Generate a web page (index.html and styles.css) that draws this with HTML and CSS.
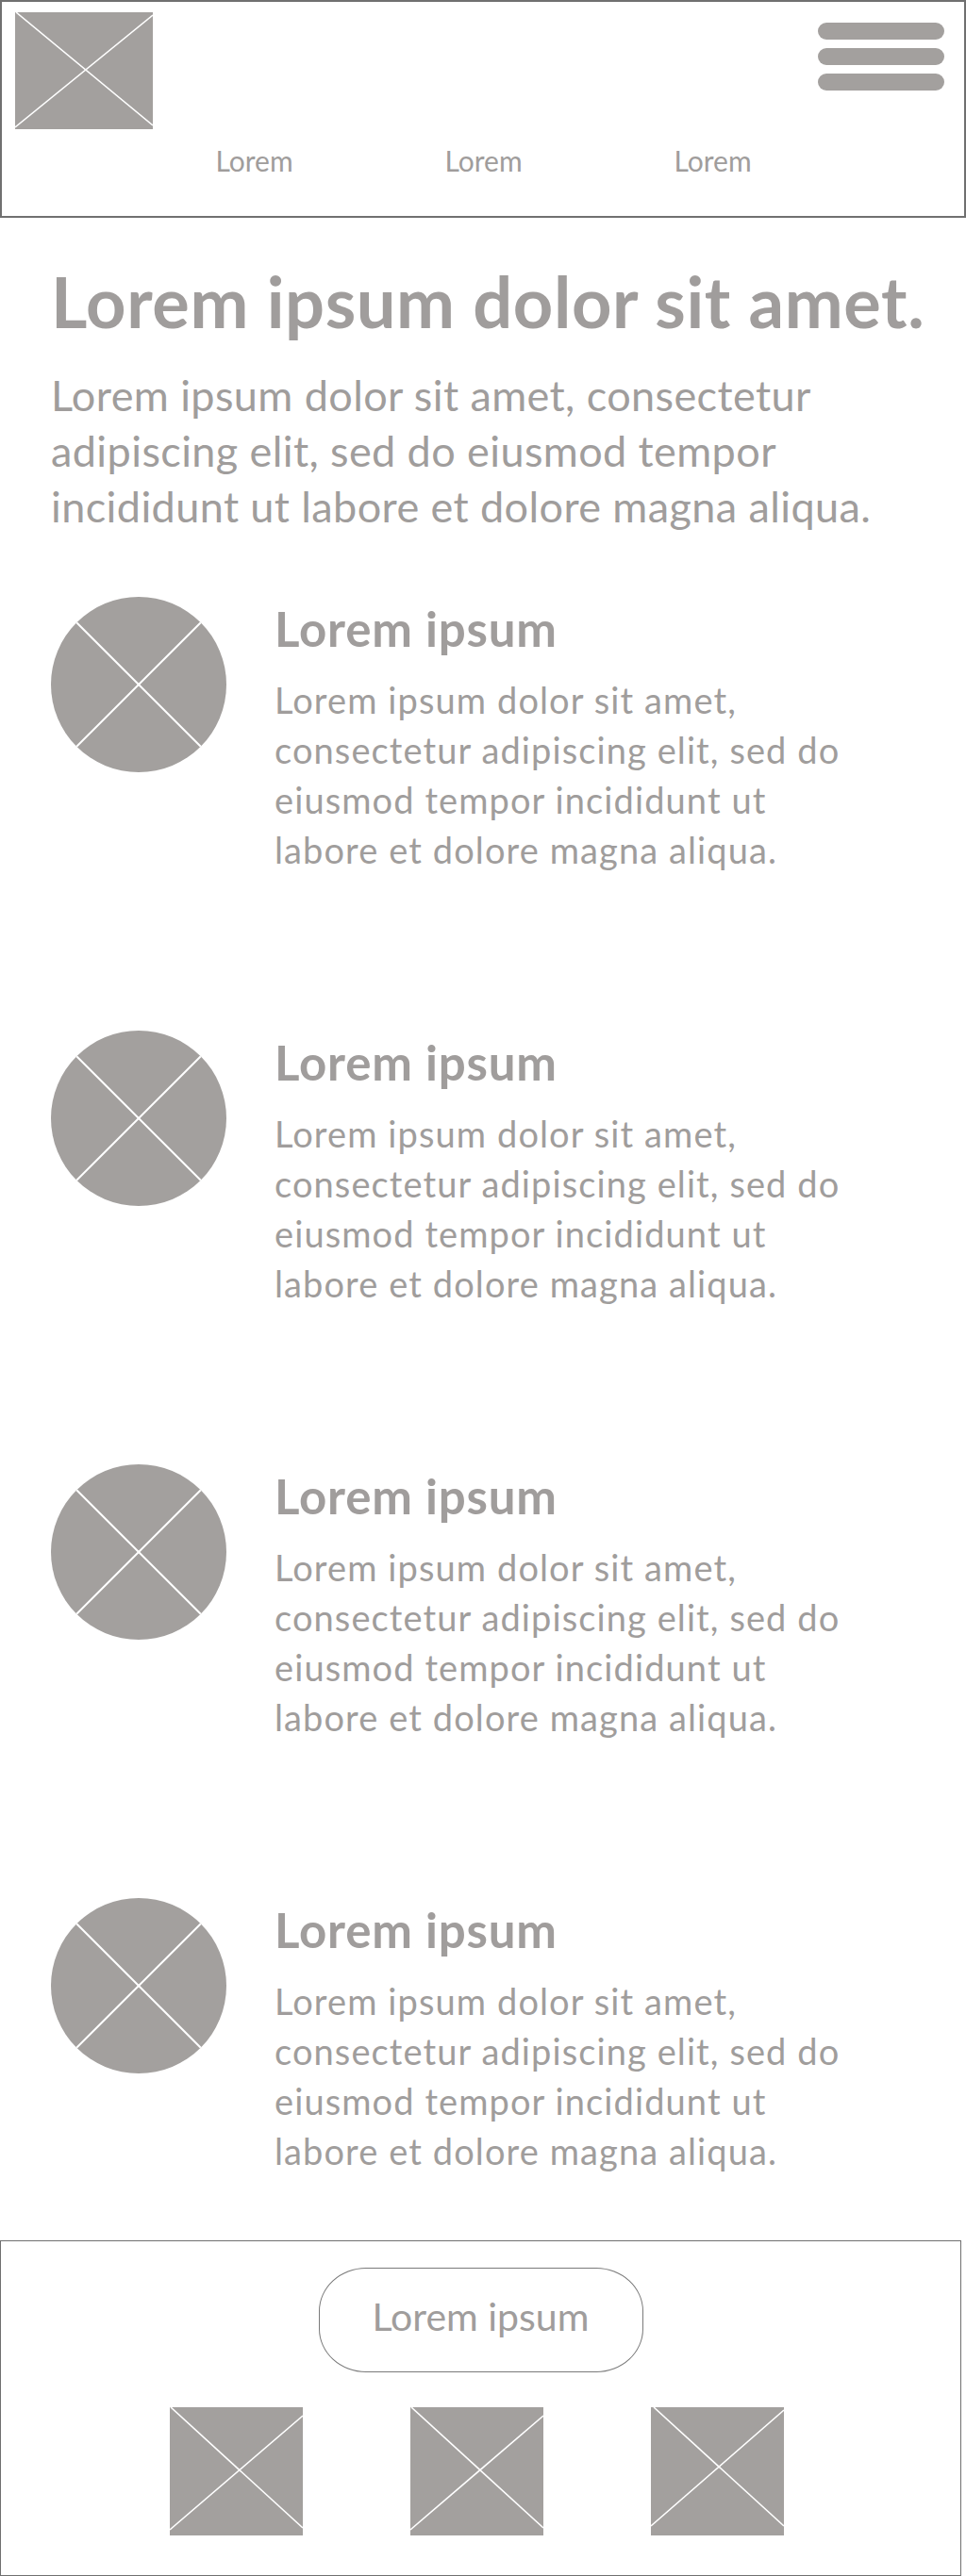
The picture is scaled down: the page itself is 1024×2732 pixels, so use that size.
FILE: index.html
```html
<!DOCTYPE html>
<html lang="en">
<head>
<meta charset="utf-8">
<title>Wireframe</title>
<link rel="stylesheet" href="styles.css">
</head>
<body>
<header class="site-header">
  <div class="header-top">
    <svg class="logo ph" viewBox="0 0 146 124" preserveAspectRatio="none" aria-hidden="true">
      <rect width="146" height="124" fill="#a3a09e"/>
      <line x1="1" y1="0" x2="146" y2="120" stroke="#fff" stroke-width="1.6"/>
      <line x1="146" y1="3" x2="0" y2="122" stroke="#fff" stroke-width="1.6"/>
    </svg>
    <div class="burger" aria-label="Menu"><span></span><span></span><span></span></div>
  </div>
  <nav class="nav">
    <a class="nav-item">Lorem</a>
    <a class="nav-item">Lorem</a>
    <a class="nav-item">Lorem</a>
  </nav>
</header>

<main class="content">
  <h1 class="hero-title">Lorem ipsum dolor sit amet.</h1>
  <p class="hero-text">Lorem ipsum dolor sit amet, consectetur<br>adipiscing elit, sed do eiusmod tempor<br>incididunt ut labore et dolore magna aliqua.</p>

  <section class="features">
    <article class="feature">
      <svg class="avatar" viewBox="0 0 186 186" aria-hidden="true">
        <circle cx="93" cy="93" r="93" fill="#a3a09e"/>
        <line x1="27.2" y1="27.2" x2="158.8" y2="158.8" stroke="#fff" stroke-width="2"/>
        <line x1="158.8" y1="27.2" x2="27.2" y2="158.8" stroke="#fff" stroke-width="2"/>
      </svg>
      <div class="feature-body">
        <h2 class="feature-title">Lorem ipsum</h2>
        <p class="feature-text">Lorem ipsum dolor sit amet,<br>consectetur adipiscing elit, sed do<br>eiusmod tempor incididunt ut<br>labore et dolore magna aliqua.</p>
      </div>
    </article>
    <article class="feature">
      <svg class="avatar" viewBox="0 0 186 186" aria-hidden="true">
        <circle cx="93" cy="93" r="93" fill="#a3a09e"/>
        <line x1="27.2" y1="27.2" x2="158.8" y2="158.8" stroke="#fff" stroke-width="2"/>
        <line x1="158.8" y1="27.2" x2="27.2" y2="158.8" stroke="#fff" stroke-width="2"/>
      </svg>
      <div class="feature-body">
        <h2 class="feature-title">Lorem ipsum</h2>
        <p class="feature-text">Lorem ipsum dolor sit amet,<br>consectetur adipiscing elit, sed do<br>eiusmod tempor incididunt ut<br>labore et dolore magna aliqua.</p>
      </div>
    </article>
    <article class="feature">
      <svg class="avatar" viewBox="0 0 186 186" aria-hidden="true">
        <circle cx="93" cy="93" r="93" fill="#a3a09e"/>
        <line x1="27.2" y1="27.2" x2="158.8" y2="158.8" stroke="#fff" stroke-width="2"/>
        <line x1="158.8" y1="27.2" x2="27.2" y2="158.8" stroke="#fff" stroke-width="2"/>
      </svg>
      <div class="feature-body">
        <h2 class="feature-title">Lorem ipsum</h2>
        <p class="feature-text">Lorem ipsum dolor sit amet,<br>consectetur adipiscing elit, sed do<br>eiusmod tempor incididunt ut<br>labore et dolore magna aliqua.</p>
      </div>
    </article>
    <article class="feature">
      <svg class="avatar" viewBox="0 0 186 186" aria-hidden="true">
        <circle cx="93" cy="93" r="93" fill="#a3a09e"/>
        <line x1="27.2" y1="27.2" x2="158.8" y2="158.8" stroke="#fff" stroke-width="2"/>
        <line x1="158.8" y1="27.2" x2="27.2" y2="158.8" stroke="#fff" stroke-width="2"/>
      </svg>
      <div class="feature-body">
        <h2 class="feature-title">Lorem ipsum</h2>
        <p class="feature-text">Lorem ipsum dolor sit amet,<br>consectetur adipiscing elit, sed do<br>eiusmod tempor incididunt ut<br>labore et dolore magna aliqua.</p>
      </div>
    </article>
  </section>
</main>

<footer class="site-footer">
  <a class="pill-button">Lorem ipsum</a>
  <div class="footer-images">
    <svg class="thumb" viewBox="0 0 141 136" preserveAspectRatio="none" aria-hidden="true">
      <rect width="141" height="136" fill="#a3a09e"/>
      <line x1="1" y1="0" x2="141" y2="128" stroke="#fff" stroke-width="1.6"/>
      <line x1="141" y1="9" x2="0" y2="130" stroke="#fff" stroke-width="1.6"/>
    </svg>
    <svg class="thumb" viewBox="0 0 141 136" preserveAspectRatio="none" aria-hidden="true">
      <rect width="141" height="136" fill="#a3a09e"/>
      <line x1="1" y1="0" x2="141" y2="128" stroke="#fff" stroke-width="1.6"/>
      <line x1="141" y1="9" x2="0" y2="130" stroke="#fff" stroke-width="1.6"/>
    </svg>
    <svg class="thumb" viewBox="0 0 141 136" preserveAspectRatio="none" aria-hidden="true">
      <rect width="141" height="136" fill="#a3a09e"/>
      <line x1="3" y1="0" x2="141" y2="126" stroke="#fff" stroke-width="1.6"/>
      <line x1="141" y1="3" x2="0" y2="126" stroke="#fff" stroke-width="1.6"/>
    </svg>
  </div>
</footer>
</body>
</html>
```
FILE: styles.css
```css
html, body {
  margin: 0;
  padding: 0;
  background: #ffffff;
}

body {
  font-family: Lato, "Open Sans", "Liberation Sans", sans-serif;
  color: #a09d9c;
  width: 1024px;
}

/* Header */
.site-header {
  box-sizing: border-box;
  height: 231px;
  border: 2px solid #707070;
  padding: 11px 21px 0 14px;
}

.header-top {
  display: flex;
  justify-content: space-between;
  align-items: flex-start;
}

.logo {
  display: block;
  width: 146px;
  height: 124px;
}

.burger {
  margin-top: 11px;
  width: 134px;
  display: flex;
  flex-direction: column;
  gap: 9.5px;
}

.burger span {
  display: block;
  height: 17.5px;
  border-radius: 9px;
  background: #a3a09e;
}

.nav {
  display: flex;
  margin: 18px 0 0 132px;
}

.nav-item {
  width: 243px;
  text-align: center;
  font-size: 30px;
  line-height: 30px;
  color: #a09d9c;
}

/* Content */
.content {
  padding: 49px 0 0 54px;
}

.hero-title {
  margin: 0;
  font-size: 74px;
  line-height: 80px;
  font-weight: 700;
  letter-spacing: 0.6px;
}

.hero-text {
  margin: 30px 0 0;
  font-size: 45px;
  line-height: 59px;
  font-weight: 400;
  letter-spacing: 0.4px;
}

.features {
  margin-top: 66px;
  display: flex;
  flex-direction: column;
  gap: 165px;
}

.feature {
  display: flex;
  align-items: flex-start;
  gap: 51px;
}

.avatar {
  display: block;
  width: 186px;
  height: 186px;
  flex: none;
}

.feature-body {
  padding-top: 5px;
}

.feature-title {
  margin: 0;
  font-size: 51px;
  line-height: 58px;
  font-weight: 700;
  letter-spacing: 0.8px;
}

.feature-text {
  margin: 20px 0 0;
  font-size: 38px;
  line-height: 53px;
  letter-spacing: 1.1px;
}

/* Footer */
.site-footer {
  box-sizing: border-box;
  width: 1019px;
  height: 356px;
  margin-top: 68px;
  border: 1.5px solid #707070;
  padding-top: 28px;
  display: flex;
  flex-direction: column;
  align-items: center;
}

.pill-button {
  box-sizing: border-box;
  width: 344px;
  height: 111px;
  border: 1px solid #7a7a7a;
  border-radius: 50px / 46px;
  display: flex;
  align-items: center;
  justify-content: center;
  font-size: 41px;
  color: #a09d9c;
  padding-bottom: 8px;
}

.footer-images {
  margin-top: 37px;
  display: flex;
  gap: 114px;
  padding-right: 9px;
}

.thumb {
  display: block;
  width: 141px;
  height: 136px;
}
```
